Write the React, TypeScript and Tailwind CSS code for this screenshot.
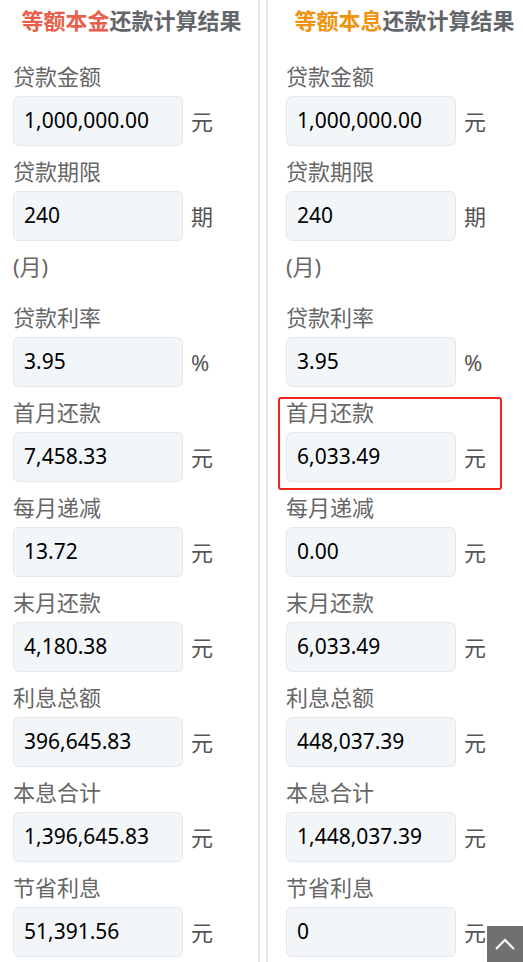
import React from "react";

type Row = { label: string; value: string; unit: string; note?: string; mark?: boolean };

const font = { fontFamily: '"Noto Sans", "Noto Sans CJK SC", sans-serif' };

const principalRows: Row[] = [
  { label: "贷款金额", value: "1,000,000.00", unit: "元" },
  { label: "贷款期限", value: "240", unit: "期", note: "(月)" },
  { label: "贷款利率", value: "3.95", unit: "%" },
  { label: "首月还款", value: "7,458.33", unit: "元" },
  { label: "每月递减", value: "13.72", unit: "元" },
  { label: "末月还款", value: "4,180.38", unit: "元" },
  { label: "利息总额", value: "396,645.83", unit: "元" },
  { label: "本息合计", value: "1,396,645.83", unit: "元" },
  { label: "节省利息", value: "51,391.56", unit: "元" },
];

const interestRows: Row[] = [
  { label: "贷款金额", value: "1,000,000.00", unit: "元" },
  { label: "贷款期限", value: "240", unit: "期", note: "(月)" },
  { label: "贷款利率", value: "3.95", unit: "%" },
  { label: "首月还款", value: "6,033.49", unit: "元", mark: true },
  { label: "每月递减", value: "0.00", unit: "元" },
  { label: "末月还款", value: "6,033.49", unit: "元" },
  { label: "利息总额", value: "448,037.39", unit: "元" },
  { label: "本息合计", value: "1,448,037.39", unit: "元" },
  { label: "节省利息", value: "0", unit: "元" },
];

function Field({ row }: { row: Row }) {
  return (
    <div className="relative">
      {row.mark && (
        <div className="absolute -left-[8px] top-0 w-[224px] h-[93px] border-2 border-[#f2231c] rounded-[3px] pointer-events-none" />
      )}
      <div className="h-[30px] leading-[30px] text-[22px] text-[#666]">{row.label}</div>
      <div className="mt-[5px] flex items-center">
        <div className="w-[170px] h-[50px] rounded-[6px] bg-[#f3f6f9] border border-[#e4e8ec] pl-[10px] flex items-center text-[21px] text-black">
          {row.value}
        </div>
        <span className="ml-[8px] text-[22px] text-[#555]">{row.unit}</span>
      </div>
      {row.note ? (
        <div className="mt-[10px] mb-[21px] h-[30px] leading-[30px] text-[22px] text-[#666]">{row.note}</div>
      ) : (
        <div className="h-[10px]" />
      )}
    </div>
  );
}

function Column({ accent, color, rows }: { accent: string; color: string; rows: Row[] }) {
  return (
    <div>
      <div className="h-[40px] leading-[40px] text-[22px] font-bold text-center text-[#62656a] whitespace-nowrap">
        <span style={{ color }}>{accent}</span>还款计算结果
      </div>
      <div className="h-[21px]" />
      {rows.map((r) => (
        <Field key={r.label} row={r} />
      ))}
    </div>
  );
}

export default function App() {
  return (
    <div className="relative w-[523px] h-[962px] overflow-hidden bg-white flex" style={font}>
      <div className="w-[260px] shrink-0 border-r-2 border-[#e3e3e3] pl-[13px] pr-[8px]">
        <Column accent="等额本金" color="#e8604c" rows={principalRows} />
      </div>
      <div className="ml-[6px] w-[257px] shrink-0 border-l-2 border-[#e3e3e3] pl-[18px]">
        <Column accent="等额本息" color="#f0930f" rows={interestRows} />
      </div>
      <button className="absolute right-0 bottom-0 w-[36px] h-[36px] bg-[#707070] flex items-center justify-center">
        <svg width="22" height="14" viewBox="0 0 22 14" fill="none" stroke="white" strokeWidth="2">
          <path d="M2 12 L11 3 L20 12" />
        </svg>
      </button>
    </div>
  );
}
